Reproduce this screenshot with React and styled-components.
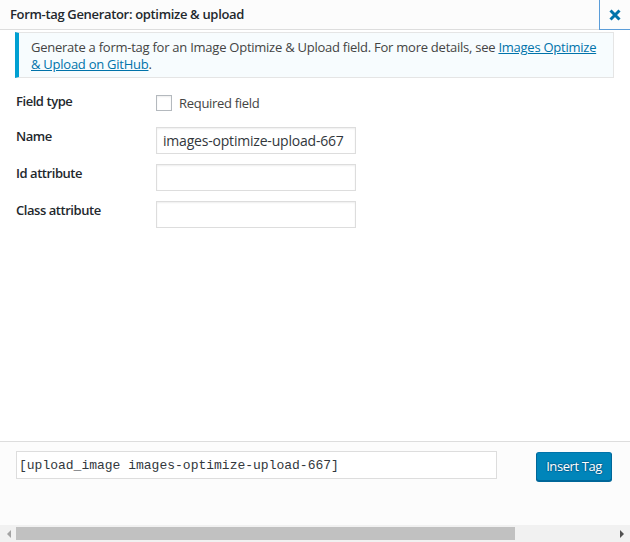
import React from 'react';
import styled, { createGlobalStyle } from 'styled-components';

const GlobalStyle = createGlobalStyle`
  html, body {
    margin: 0;
    padding: 0;
    background: #fff;
  }
  body {
    font-family: "Segoe UI", "Open Sans", "Noto Sans", sans-serif;
    font-size: 13px;
    color: #23282d;
  }
`;

const Frame = styled.div`
  width: 630px;
  height: 542px;
  display: flex;
  flex-direction: column;
  overflow: hidden;
`;

// Title bar
const Header = styled.div`
  height: 29px;
  flex-shrink: 0;
  display: flex;
  align-items: stretch;
  background: #fcfcfc;
  border-bottom: 1px solid #ddd;
`;

const Title = styled.h1`
  flex: 1;
  margin: 0;
  padding: 0 10px;
  font-size: 13px;
  font-weight: 600;
  line-height: 29px;
  letter-spacing: -0.33px;
  color: #23282d;
`;

const CloseButton = styled.button`
  width: 31px;
  padding: 0;
  margin-bottom: -1px;
  background: #fcfcfc;
  border: 1px solid #5b9dd9;
  border-right: none;
  border-top: none;
  display: flex;
  align-items: center;
  justify-content: center;
  cursor: pointer;
`;

const Body = styled.div`
  flex: 1;
  padding: 2px 16px 0 15px;
  display: flex;
  flex-direction: column;
`;

const Notice = styled.div`
  background: #f7fcfe;
  border: 1px solid #e5e5e5;
  border-left: 4px solid #00a0d2;
  padding: 6px 12px 4px 12px;
  line-height: 17px;
  font-size: 13px;
  letter-spacing: -0.25px;
  color: #444;
`;

const Link = styled.a`
  color: #0073aa;
  text-decoration: underline;
`;

const FieldTable = styled.div`
  display: grid;
  grid-template-columns: 140px 200px;
  row-gap: 10px;
  margin-top: 17px;
  padding-left: 1px;
`;

const Label = styled.div`
  font-weight: 600;
  font-size: 13px;
  line-height: 18px;
  margin-top: ${(p) => p.$top || 0}px;
  letter-spacing: -0.45px;
`;

const CheckRow = styled.label`
  display: flex;
  align-items: center;
  gap: 7px;
  height: 16px;
  margin-bottom: 6px;
  color: #444;
  letter-spacing: -0.3px;
`;

const Checkbox = styled.span`
  width: 14px;
  height: 14px;
  border: 1px solid #b4b9be;
  background: #fff;
  box-shadow: inset 0 1px 2px rgba(0, 0, 0, 0.07);
`;

const TextInput = styled.input`
  box-sizing: border-box;
  width: 200px;
  height: 27px;
  margin: 0;
  padding: 2px 6px;
  border: 1px solid #ddd;
  box-shadow: inset 0 1px 2px rgba(0, 0, 0, 0.07);
  font-family: inherit;
  font-size: 14px;
  color: #32373c;
  letter-spacing: -0.2px;
  outline: none;
`;

// Footer with generated tag
const Footer = styled.div`
  box-sizing: border-box;
  height: 84px;
  flex-shrink: 0;
  background: #fcfcfc;
  border-top: 1px solid #ddd;
  display: flex;
  align-items: flex-start;
  justify-content: space-between;
  padding: 9px 18px 0 16px;
`;

const TagInput = styled.input`
  box-sizing: border-box;
  width: 481px;
  height: 28px;
  margin: 0;
  padding: 0 4px 0 2px;
  border: 1px solid #ddd;
  background: #fff;
  font-family: Consolas, "Liberation Mono", monospace;
  font-size: 13px;
  color: #32373c;
  outline: none;
`;

const InsertButton = styled.button`
  margin-top: 1px;
  height: 29px;
  padding: 0 9px 1px;
  background: #0085ba;
  border: 1px solid #0073aa;
  border-color: #0073aa #006799 #006799;
  border-radius: 3px;
  box-shadow: 0 1px 0 #006799;
  color: #fff;
  font-family: inherit;
  font-size: 13px;
  letter-spacing: -0.4px;
  text-shadow: 0 -1px 1px #006799, 1px 0 1px #006799, 0 1px 1px #006799, -1px 0 1px #006799;
  cursor: pointer;
`;

// Fake horizontal scrollbar at the bottom of the window
const ScrollBar = styled.div`
  height: 17px;
  flex-shrink: 0;
  background: #f1f1f1;
  display: flex;
  align-items: center;
`;

const Arrow = styled.div`
  width: 16px;
  display: flex;
  justify-content: center;
`;

const Track = styled.div`
  flex: 1;
  display: flex;
  align-items: center;
`;

const Thumb = styled.div`
  height: 13px;
  background: #c1c1c1;
`;

const Triangle = ({ dir, color }) => (
  <svg width="5" height="8" viewBox="0 0 5 8">
    {dir === 'left' ? (
      <path d="M5 0 L5 8 L1 4 Z" fill={color} />
    ) : (
      <path d="M0 0 L0 8 L4 4 Z" fill={color} />
    )}
  </svg>
);

const fields = [
  { label: 'Name', value: 'images-optimize-upload-667' },
  { label: 'Id attribute', value: '' },
  { label: 'Class attribute', value: '' },
];

export default function App() {
  return (
    <Frame>
      <GlobalStyle />
      <Header>
        <Title>Form-tag Generator: optimize &amp; upload</Title>
        <CloseButton aria-label="Close">
          <svg width="12" height="12" viewBox="0 0 12 12">
            <path d="M1.5 1.5 L10.5 10.5 M10.5 1.5 L1.5 10.5" stroke="#0073aa" strokeWidth="3" />
          </svg>
        </CloseButton>
      </Header>

      <Body>
        <Notice>
          Generate a form-tag for an Image Optimize &amp; Upload field. For more details, see{' '}
          <Link href="#">Images Optimize &amp; Upload on GitHub</Link>.
        </Notice>

        <FieldTable>
          <Label $top={-3}>Field type</Label>
          <CheckRow>
            <Checkbox />
            Required field
          </CheckRow>
          {fields.map((f) => (
            <React.Fragment key={f.label}>
              <Label $top={0}>{f.label}</Label>
              <TextInput defaultValue={f.value} />
            </React.Fragment>
          ))}
        </FieldTable>
      </Body>

      <Footer>
        <TagInput readOnly value="[upload_image images-optimize-upload-667]" />
        <InsertButton>Insert Tag</InsertButton>
      </Footer>

      <ScrollBar>
        <Arrow>
          <Triangle dir="left" color="#a3a3a3" />
        </Arrow>
        <Track>
          <Thumb style={{ width: '499px' }} />
        </Track>
        <Arrow>
          <Triangle dir="right" color="#505050" />
        </Arrow>
      </ScrollBar>
    </Frame>
  );
}
